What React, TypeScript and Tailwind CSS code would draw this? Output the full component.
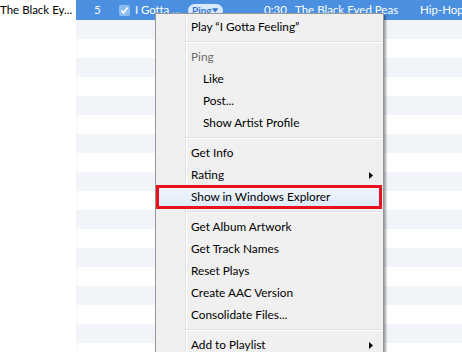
import React from "react";

type Entry =
  | { kind: "item"; label: string; indent?: boolean; header?: boolean; sub?: boolean; marked?: boolean }
  | { kind: "sep" };

const menu: Entry[] = [
  { kind: "item", label: "Play \u201cI Gotta Feeling\u201d" },
  { kind: "sep" },
  { kind: "item", label: "Ping", header: true },
  { kind: "item", label: "Like", indent: true },
  { kind: "item", label: "Post...", indent: true },
  { kind: "item", label: "Show Artist Profile", indent: true },
  { kind: "sep" },
  { kind: "item", label: "Get Info" },
  { kind: "item", label: "Rating", sub: true },
  { kind: "item", label: "Show in Windows Explorer", marked: true },
  { kind: "sep" },
  { kind: "item", label: "Get Album Artwork" },
  { kind: "item", label: "Get Track Names" },
  { kind: "item", label: "Reset Plays" },
  { kind: "item", label: "Create AAC Version" },
  { kind: "item", label: "Consolidate Files..." },
  { kind: "sep" },
  { kind: "item", label: "Add to Playlist", sub: true },
];

const Arrow = () => (
  <svg width="4" height="7" viewBox="0 0 4 7" className="absolute right-[10px] top-[8px]">
    <path d="M0 0 L4 3.5 L0 7 Z" fill="#000" />
  </svg>
);

const ContextMenu = () => (
  <div className="absolute left-[155px] top-[13px] w-[229px] border border-[#979797] bg-[#f0f0f0] pt-[2px] shadow-[2px_2px_2px_rgba(0,0,0,0.35)]">
    {/* gutter */}
    <div className="absolute left-[29px] top-[2px] bottom-0 w-[2px] border-l border-[#e2e3e3] border-r border-r-white" />
    {menu.map((e, i) =>
      e.kind === "sep" ? (
        <div key={i} className="relative h-[8px] flex flex-col justify-center ml-[30px] mr-[2px]">
          <div className="h-px bg-[#e0e0e0]" />
          <div className="h-px bg-white" />
        </div>
      ) : (
        <div key={i} className="relative h-[22px]">
          {e.marked && (
            <>
              <div className="absolute left-[2px] right-[3px] top-0 bottom-0 rounded-[3px] border border-[#c6dcf5] bg-gradient-to-b from-[#f1f6fd] to-[#dde9f8]" />
              <div className="absolute left-0 right-px -top-px -bottom-px border-[3px] border-[#e8121f]" />
            </>
          )}
          <div
            className={`relative h-full flex items-center text-[11.8px] ${
              e.indent ? "pl-[47px]" : "pl-[35px]"
            } ${e.header ? "text-[#6d6d6d]" : "text-black"}`}
          >
            {e.label}
          </div>
          {e.sub && <Arrow />}
        </div>
      )
    )}
  </div>
);

export default function App() {
  const rows = Array.from({ length: 18 }, (_, i) => i);
  return (
    <div
      className="relative w-[462px] h-[352px] overflow-hidden bg-white"
      style={{ fontFamily: 'Lato, "Noto Sans", sans-serif' }}
    >
      {/* selected row */}
      <div className="flex h-[20px] text-[11.5px]">
        <div className="w-[76px] shrink-0 bg-white text-black flex items-center whitespace-nowrap">
          The Black Ey...
        </div>
        <div className="flex-1 bg-[#4a8fe0] text-white flex items-center whitespace-nowrap">
          <span className="ml-[18px] w-[25px] shrink-0">5</span>
          <span className="w-[11px] h-[11px] shrink-0 rounded-[2px] bg-[#8ebcf0] flex items-center justify-center">
            <svg width="9" height="9" viewBox="0 0 9 9">
              <path d="M1.5 4.5 L3.6 7 L7.5 1.5" stroke="#fff" strokeWidth="1.6" fill="none" />
            </svg>
          </span>
          <span className="ml-[5px] w-[53px] shrink-0 tracking-[-0.1px]">I Gotta ...</span>
          <span className="w-[35px] h-[13px] shrink-0 pl-[4px] pr-[5px] rounded-full bg-[#d9e8fa] text-[#3a78cc] text-[10px] font-bold flex items-center justify-between leading-none">
            Ping
            <svg width="7" height="5" viewBox="0 0 7 5">
              <path d="M0 0 L7 0 L3.5 5 Z" fill="#3a78cc" />
            </svg>
          </span>
          <span className="ml-[41px] w-[31px] shrink-0">0:30</span>
          <span className="w-[125px] shrink-0">The Black Eyed Peas</span>
          <span className="shrink-0">Hip-Hop</span>
        </div>
      </div>
      {rows.map((i) => (
        <div key={i} className="flex h-[19px]">
          <div className="w-[76px] bg-white" />
          <div className={`flex-1 border-l border-[#f4f4f4] ${i % 2 === 0 ? "bg-[#f1f5fa]" : "bg-white"}`} />
        </div>
      ))}
      <ContextMenu />
    </div>
  );
}
